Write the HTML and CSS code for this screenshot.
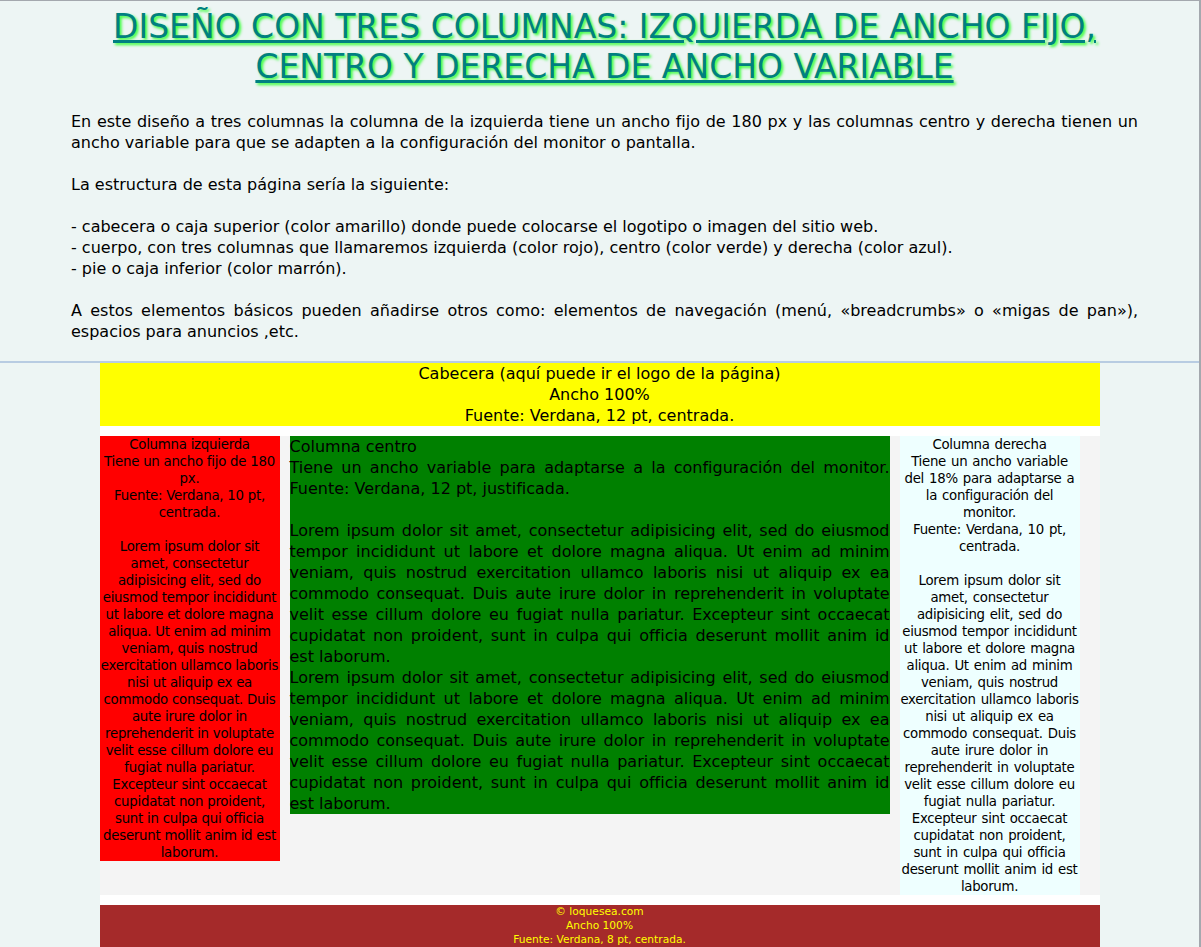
FILE: index.html
```html
<!DOCTYPE html>
<html lang="es">
<head>
<meta charset="utf-8">
<title>Diseño con tres columnas</title>
<link rel="stylesheet" href="styles.css">
</head>
<body>
<div class="frame">
  <div class="intro">
    <h1 class="title">DISEÑO CON TRES COLUMNAS: IZQUIERDA DE ANCHO FIJO, CENTRO Y DERECHA DE ANCHO VARIABLE</h1>
    <p class="desc">En este diseño a tres columnas la columna de la izquierda tiene un ancho fijo de 180 px y las columnas centro y derecha tienen un ancho variable para que se adapten a la configuración del monitor o pantalla.<br><br>La estructura de esta página sería la siguiente:<br><br>- cabecera o caja superior (color amarillo) donde puede colocarse el logotipo o imagen del sitio web.<br>- cuerpo, con tres columnas que llamaremos izquierda (color rojo), centro (color verde) y derecha (color azul).<br>- pie o caja inferior (color marrón).<br><br>A estos elementos básicos pueden añadirse otros como: elementos de navegación (menú, «breadcrumbs» o «migas de pan»), espacios para anuncios ,etc.</p>
  </div>
  <div class="layout">
    <div class="cabecera">Cabecera (aquí puede ir el logo de la página)<br>Ancho 100%<br>Fuente: Verdana, 12 pt, centrada.</div>
    <div class="cuerpo">
      <div class="izquierda">Columna izquierda<br>Tiene un ancho fijo de 180 px.<br>Fuente: Verdana, 10 pt, centrada.<br><br>Lorem ipsum dolor sit amet, consectetur adipisicing elit, sed do eiusmod tempor incididunt ut labore et dolore magna aliqua. Ut enim ad minim veniam, quis nostrud exercitation ullamco laboris nisi ut aliquip ex ea commodo consequat. Duis aute irure dolor in reprehenderit in voluptate velit esse cillum dolore eu fugiat nulla pariatur. Excepteur sint occaecat cupidatat non proident, sunt in culpa qui officia deserunt mollit anim id est laborum.</div>
      <div class="centro">Columna centro<br>Tiene un ancho variable para adaptarse a la configuración del monitor. Fuente: Verdana, 12 pt, justificada.<br><br>Lorem ipsum dolor sit amet, consectetur adipisicing elit, sed do eiusmod tempor incididunt ut labore et dolore magna aliqua. Ut enim ad minim veniam, quis nostrud exercitation ullamco laboris nisi ut aliquip ex ea commodo consequat. Duis aute irure dolor in reprehenderit in voluptate velit esse cillum dolore eu fugiat nulla pariatur. Excepteur sint occaecat cupidatat non proident, sunt in culpa qui officia deserunt mollit anim id est laborum.<br>Lorem ipsum dolor sit amet, consectetur adipisicing elit, sed do eiusmod tempor incididunt ut labore et dolore magna aliqua. Ut enim ad minim veniam, quis nostrud exercitation ullamco laboris nisi ut aliquip ex ea commodo consequat. Duis aute irure dolor in reprehenderit in voluptate velit esse cillum dolore eu fugiat nulla pariatur. Excepteur sint occaecat cupidatat non proident, sunt in culpa qui officia deserunt mollit anim id est laborum.</div>
      <div class="derecha">Columna derecha<br>Tiene un ancho variable del 18% para adaptarse a la configuración del monitor.<br>Fuente: Verdana, 10 pt, centrada.<br><br>Lorem ipsum dolor sit amet, consectetur adipisicing elit, sed do eiusmod tempor incididunt ut labore et dolore magna aliqua. Ut enim ad minim veniam, quis nostrud exercitation ullamco laboris nisi ut aliquip ex ea commodo consequat. Duis aute irure dolor in reprehenderit in voluptate velit esse cillum dolore eu fugiat nulla pariatur. Excepteur sint occaecat cupidatat non proident, sunt in culpa qui officia deserunt mollit anim id est laborum.</div>
    </div>
    <div class="pie">© loquesea.com<br>Ancho 100%<br>Fuente: Verdana, 8 pt, centrada.</div>
  </div>
</div>
</body>
</html>
```
FILE: styles.css
```css
html, body {
  margin: 0;
  padding: 0;
  background: #edf5f4;
}
body {
  font-family: "DejaVu Sans", Verdana, sans-serif;
  color: #000;
}
.frame {
  border-top: 1px solid #a4a8ae;
  border-right: 2px solid #a4a8ae;
  min-height: 946px;
  box-sizing: border-box;
}
.intro {
  padding: 6px 61px 19px 71px;
  border-bottom: 2px solid #b8cce2;
}
.title {
  margin: 0 0 24px;
  font-size: 33px;
  line-height: 40px;
  font-weight: normal;
  text-align: center;
  color: #008080;
  text-decoration: underline;
  text-shadow: 2px 2px 3px #33ff33;
}
.desc {
  margin: 0;
  font-size: 16px;
  line-height: 21px;
  text-align: justify;
}
.layout {
  width: 1000px;
  margin: 0 auto;
  background: #ffffff;
}
.cabecera {
  background: #ffff00;
  text-align: center;
  font-size: 16px;
  line-height: 21px;
}
.cuerpo {
  margin-top: 10px;
  display: flex;
  align-items: flex-start;
  gap: 10px;
  background: #f4f4f4;
}
.izquierda {
  width: 180px;
  background: #ff0000;
  font-size: 13.33px;
  line-height: 17px;
  letter-spacing: -0.25px;
  text-align: center;
}
.centro {
  width: 600px;
  background: #008000;
  font-size: 16px;
  line-height: 21px;
  text-align: justify;
}
.derecha {
  width: 180px;
  background: #eeffff;
  font-size: 13.33px;
  line-height: 17px;
  letter-spacing: -0.3px;
  word-spacing: 1.1px;
  text-align: center;
}
.pie {
  margin-top: 10px;
  background: #a52a2a;
  color: #ffff00;
  font-size: 10.67px;
  line-height: 14px;
  text-align: center;
}
```
